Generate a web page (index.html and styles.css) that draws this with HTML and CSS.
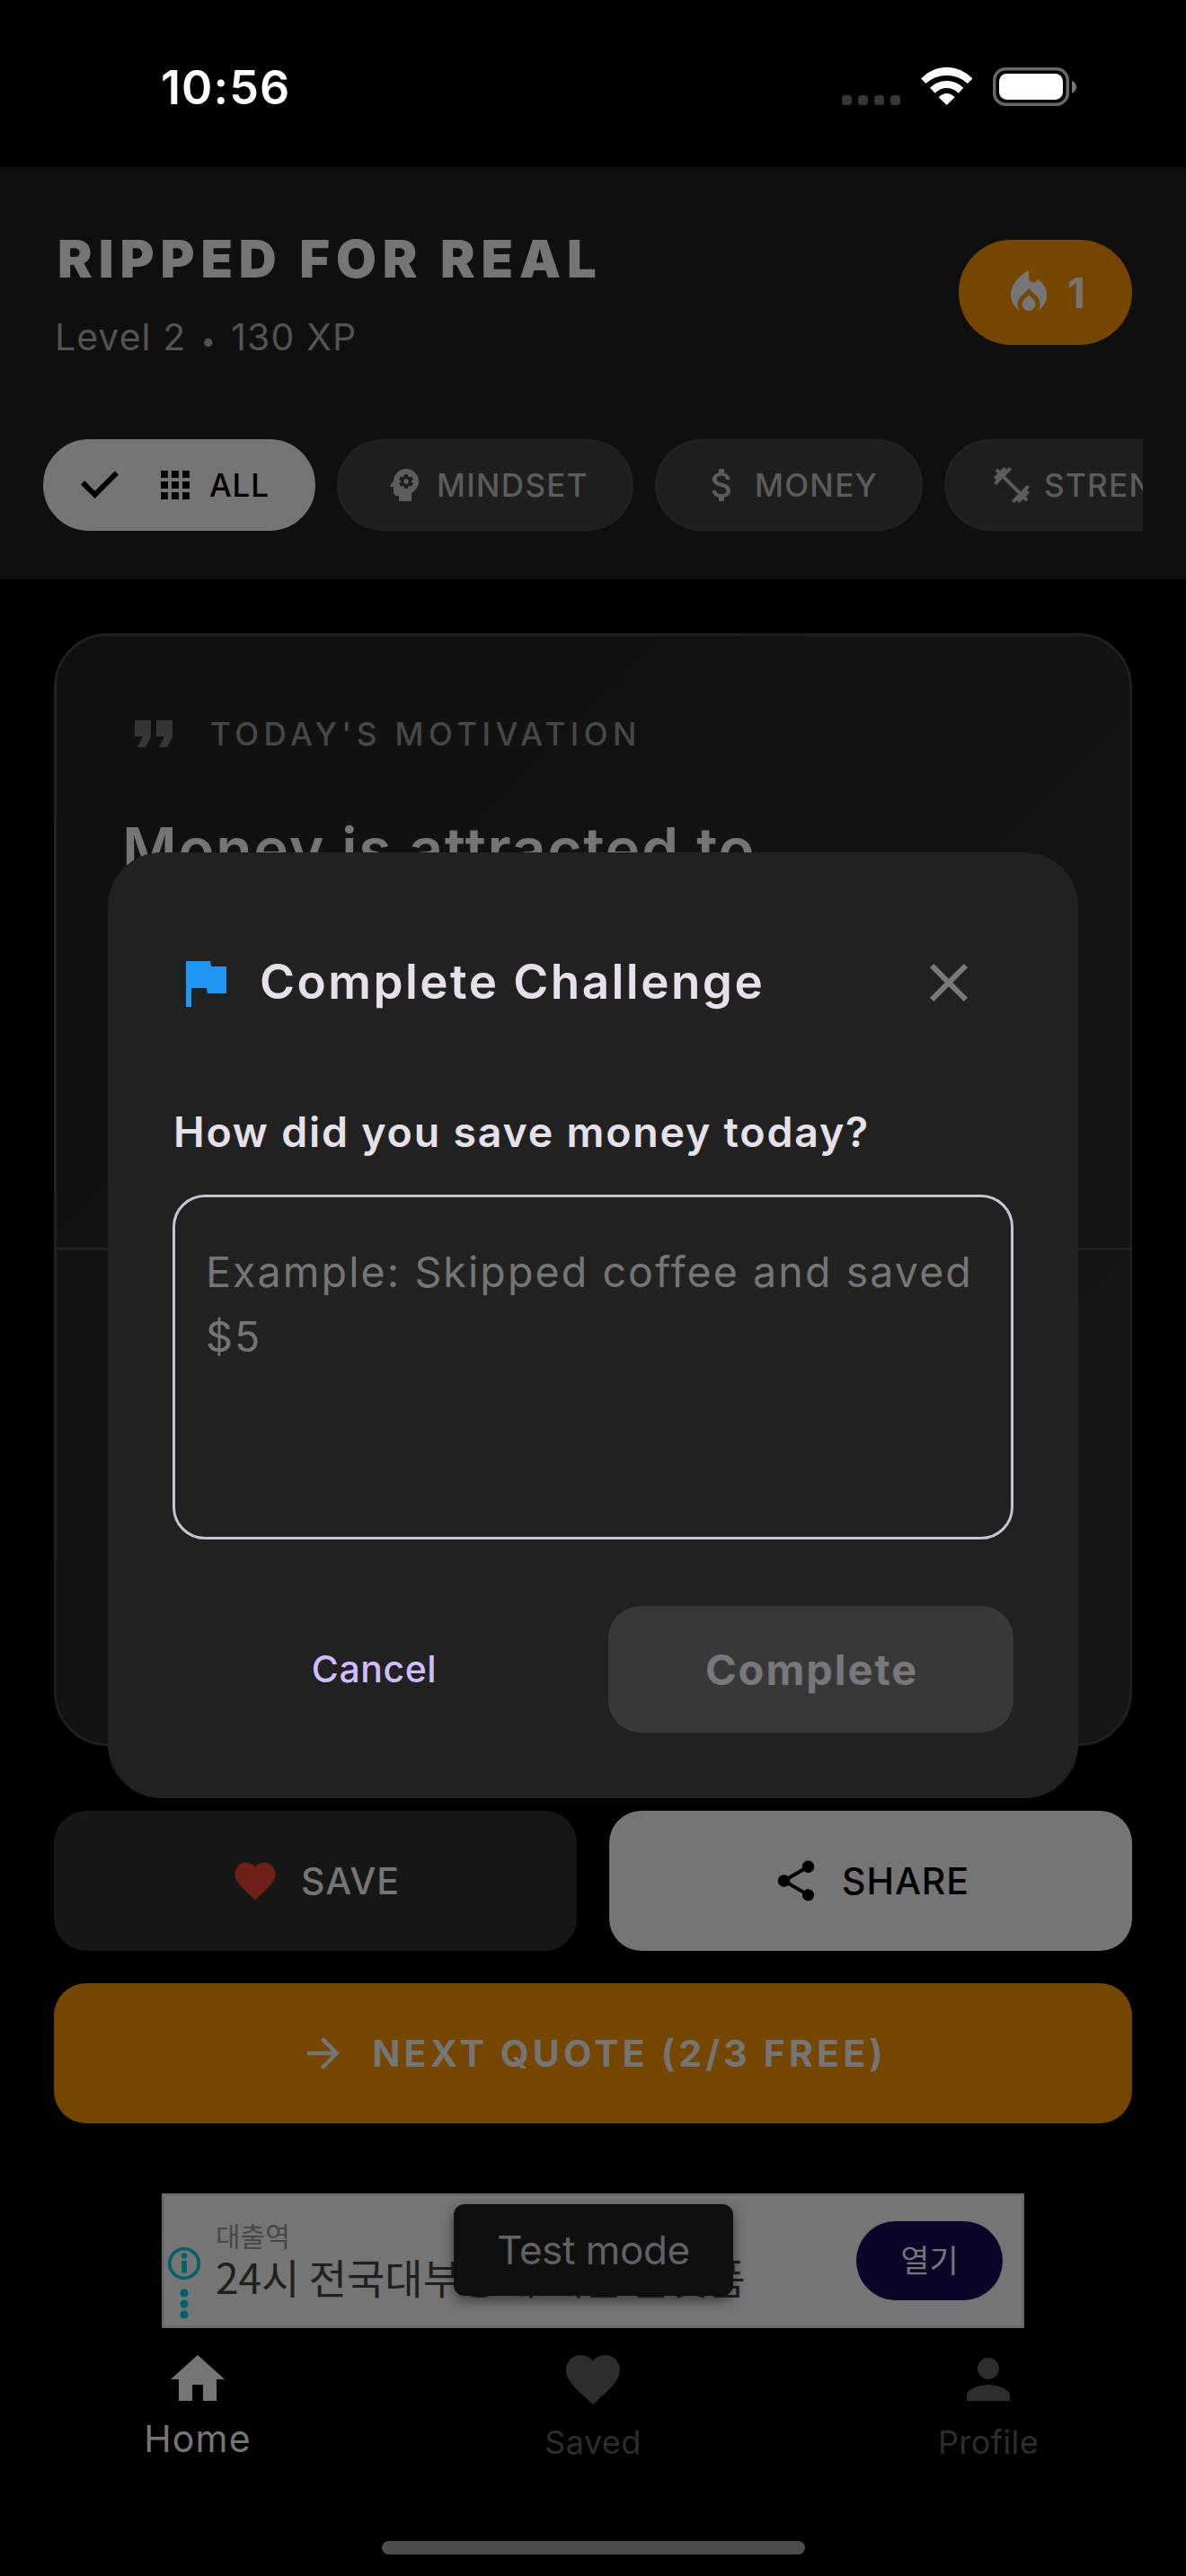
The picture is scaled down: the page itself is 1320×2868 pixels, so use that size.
FILE: index.html
```html
<!DOCTYPE html>
<html lang="en">
<head>
<meta charset="utf-8">
<title>Ripped For Real</title>
<link rel="stylesheet" href="styles.css">
</head>
<body>
<div class="app">
  <div class="status">
    <span class="clock">10:56</span>
    <div class="status-icons">
      <span class="cell"><i></i><i></i><i></i><i></i></span>
      <svg class="wifi" viewBox="0 0 57.4 42"><path d="M0 12.5A39 39 0 0 1 57.4 12.5L51.9 18A34.4 34.4 0 0 0 5.5 18ZM10 22.7A26.6 26.6 0 0 1 47.4 22.7L41.7 28.7A17.7 17.7 0 0 0 15.7 28.7ZM19.7 33.3A11.6 11.6 0 0 1 37.7 33.3L28.7 42Z"/></svg>
      <svg class="battery" viewBox="0 0 94 43"><rect x="1.75" y="1.75" width="81.5" height="39.5" rx="12.5" fill="none" stroke="#686868" stroke-width="3.5"/><rect x="7" y="7" width="71" height="29" rx="8.5"/><path d="M88 15c3 .8 5 3.500 5 6.700s-2 6-5 6.800z" fill="#757575"/></svg>
    </div>
  </div>

  <header class="header">
    <div class="brand-row">
      <div class="brand">
        <h1 class="title">RIPPED FOR REAL</h1>
        <p class="level">Level 2 <span class="dot">•</span> 130 XP</p>
      </div>
      <div class="streak">
        <svg class="i60" viewBox="0 0 24 24"><path d="M16 6l-.44.55C14.38 8.02 12 7.19 12 5.300V2S4 6 4 13c0 2.920 1.560 5.470 3.890 6.860C7.330 19.070 7 18.110 7 17.060c0-1.320.52-2.560 1.470-3.500L12 10.100l3.530 3.470c.95.93 1.470 2.170 1.470 3.500 0 1.020-.31 1.960-.85 2.750 1.890-1.150 3.290-3.060 3.710-5.300.66-3.550-1.070-6.900-3.860-8.520z"/><path d="M12 12.900l-2.130 2.090C9.310 15.550 9 16.280 9 17.060 9 18.680 10.350 20 12 20s3-1.320 3-2.940c0-.78-.31-1.520-.87-2.070L12 12.900z"/></svg>
        <span>1</span>
      </div>
    </div>
    <div class="chips">
      <div class="chip chip-all">
        <svg class="i54" viewBox="0 0 54 54"><path d="M8.100 24.300L21.600 37.800 45.900 13.500" fill="none" stroke="currentColor" stroke-width="6"/></svg>
        <svg class="i48" viewBox="0 0 24 24"><path d="M4 8h4V4H4v4zm6 12h4v-4h-4v4zm-6 0h4v-4H4v4zm0-6h4v-4H4v4zm6 0h4v-4h-4v4zm6-10v4h4V4h-4zm-6 4h4V4h-4v4zm6 6h4v-4h-4v4zm0 6h4v-4h-4v4z"/></svg>
        <span>ALL</span>
      </div>
      <div class="chip chip-mindset">
        <svg class="i48" viewBox="0 0 24 24"><path d="M13 8.570c-.79 0-1.430.64-1.430 1.430s.64 1.430 1.430 1.430 1.430-.64 1.430-1.430-.64-1.430-1.430-1.430z"/><path d="M13 3C9.250 3 6.200 5.940 6.020 9.640L4.100 12.200c-.25.33-.01.8.4.8H6v3c0 1.100.9 2 2 2h1v3h7v-4.680c2.360-1.120 4-3.530 4-6.320 0-3.870-3.130-7-7-7zm3 7c0 .13-.01.26-.02.39l.83.66c.08.06.1.16.05.25l-.8 1.390c-.05.09-.16.12-.24.09l-.99-.4c-.21.16-.43.29-.67.39L14 13.830c-.01.1-.1.17-.2.17h-1.600c-.1 0-.18-.07-.2-.17l-.15-1.060c-.25-.1-.47-.23-.68-.39l-.99.4c-.09.03-.2 0-.25-.09l-.8-1.390c-.05-.08-.03-.19.05-.25l.84-.66c-.01-.13-.02-.26-.02-.39s.02-.27.04-.39l-.85-.66c-.08-.06-.1-.16-.05-.26l.8-1.380c.05-.09.15-.12.24-.09l1 .4c.2-.15.43-.29.67-.39L12 6.170c.02-.1.1-.17.2-.17h1.600c.1 0 .18.07.2.17l.15 1.060c.24.1.46.23.67.39l1-.4c.09-.03.2 0 .24.09l.8 1.380c.05.09.03.2-.05.26l-.85.66c.03.12.04.25.04.39z"/></svg>
        <span>MINDSET</span>
      </div>
      <div class="chip chip-money">
        <svg class="i48" viewBox="0 0 24 24"><path d="M11.800 10.900c-2.270-.59-3-1.200-3-2.150 0-1.090 1.010-1.850 2.700-1.850 1.780 0 2.440.85 2.500 2.100h2.210c-.07-1.720-1.120-3.300-3.210-3.810V3h-3v2.160c-1.940.42-3.500 1.680-3.500 3.610 0 2.310 1.910 3.460 4.700 4.130 2.500.6 3 1.480 3 2.410 0 .69-.49 1.790-2.700 1.790-2.060 0-2.870-.92-2.980-2.100h-2.200c.12 2.190 1.760 3.420 3.680 3.830V21h3v-2.150c1.950-.37 3.500-1.500 3.500-3.550 0-2.840-2.430-3.810-4.700-4.400z"/></svg>
        <span>MONEY</span>
      </div>
      <div class="chip chip-strength">
        <svg class="i48" viewBox="0 0 24 24"><path d="M20.570 14.860L22 13.430 20.570 12 17 15.570 8.430 7 12 3.430 10.570 2 9.140 3.430 7.710 2 5.570 4.140 4.140 2.710 2.710 4.140l1.430 1.430L2 7.710l1.430 1.430L2 10.570 3.430 12 7 8.430 15.570 17 12 20.570 13.430 22l1.430-1.430L16.290 22l2.140-2.140 1.430 1.430 1.430-1.430-1.430-1.430L22 16.290z"/></svg>
        <span>STRENGTH</span>
      </div>
    </div>
  </header>

  <main class="main">
    <section class="card">
      <div class="quote">
        <div class="quote-head">
          <svg class="i72" viewBox="0 0 24 24"><path d="M6 17h3l2-4V7H5v6h3zm8 0h3l2-4V7h-6v6h3z"/></svg>
          <span>TODAY'S MOTIVATION</span>
        </div>
        <p class="quote-text">Money is attracted to</p>
      </div>
    </section>
    <div class="actions">
      <div class="btn btn-save">
        <svg class="i54 red" viewBox="0 0 24 24"><path d="M12 21.350l-1.450-1.320C5.400 15.360 2 12.280 2 8.500 2 5.420 4.420 3 7.500 3c1.740 0 3.410.81 4.500 2.090C13.090 3.810 14.760 3 16.500 3 19.580 3 22 5.420 22 8.500c0 3.780-3.400 6.860-8.550 11.540L12 21.350z"/></svg>
        <span>SAVE</span>
      </div>
      <div class="btn btn-share">
        <svg class="i54" viewBox="0 0 24 24"><path d="M18 16.080c-.76 0-1.440.3-1.960.77L8.910 12.700c.05-.23.09-.46.09-.7s-.04-.47-.09-.7l7.050-4.110c.54.5 1.250.81 2.040.81 1.660 0 3-1.340 3-3s-1.340-3-3-3-3 1.340-3 3c0 .24.04.47.09.7L8.040 9.810C7.500 9.310 6.790 9 6 9c-1.660 0-3 1.340-3 3s1.340 3 3 3c.79 0 1.500-.31 2.040-.81l7.120 4.160c-.05.21-.08.43-.08.65 0 1.610 1.310 2.920 2.920 2.920s2.920-1.310 2.920-2.920-1.310-2.920-2.920-2.920z"/></svg>
        <span>SHARE</span>
      </div>
    </div>
    <div class="btn btn-next">
      <svg class="i54" viewBox="0 0 24 24"><path d="M12 4l-1.410 1.410L16.170 11H4v2h12.170l-5.580 5.590L12 20l8-8z"/></svg>
      <span>NEXT QUOTE (2/3 FREE)</span>
    </div>
  </main>

  <div class="ad">
    <svg class="ad-marks" viewBox="0 0 38 84"><circle cx="19" cy="19" r="16.300" fill="none" stroke="currentColor" stroke-width="3.500"/><circle cx="19" cy="10.500" r="3.200"/><path d="M16.200 16h5.600v13.500h-5.600z"/><circle cx="19" cy="52" r="4.600"/><circle cx="19" cy="64" r="4.600"/><circle cx="19" cy="76" r="4.600"/></svg>
    <div class="ad-copy">
      <p class="ad-brand">대출역</p>
      <p class="ad-title">24시 전국대부중개 대출 플랫폼</p>
    </div>
    <div class="ad-cta">열기</div>
    <div class="toast">Test mode</div>
  </div>

  <nav class="nav">
    <div class="tab tab-on">
      <svg class="i72" viewBox="0 0 24 24"><path d="M10 20v-6h4v6h5v-8h3L12 3 2 12h3v8z"/></svg>
      <span>Home</span>
    </div>
    <div class="tab">
      <svg class="i72" viewBox="0 0 24 24"><path d="M12 21.350l-1.450-1.320C5.400 15.360 2 12.280 2 8.500 2 5.420 4.420 3 7.500 3c1.740 0 3.410.81 4.500 2.090C13.090 3.810 14.760 3 16.500 3 19.580 3 22 5.420 22 8.500c0 3.780-3.400 6.860-8.550 11.540L12 21.350z"/></svg>
      <span>Saved</span>
    </div>
    <div class="tab">
      <svg class="i72" viewBox="0 0 24 24"><path d="M12 12c2.210 0 4-1.790 4-4s-1.790-4-4-4-4 1.790-4 4 1.790 4 4 4zm0 2c-2.670 0-8 1.340-8 4v2h16v-2c0-2.660-5.330-4-8-4z"/></svg>
      <span>Profile</span>
    </div>
  </nav>
  <div class="home-indicator"></div>

  <div class="dialog">
    <div class="dialog-head">
      <svg class="i72 flag" viewBox="0 0 24 24"><path d="M14.400 6L14 4H5v17h2v-7h5.600l.4 2h7V6z"/></svg>
      <h2 class="dialog-title">Complete Challenge</h2>
      <svg class="i72 close" viewBox="0 0 24 24"><path d="M19 6.410L17.590 5 12 10.590 6.410 5 5 6.410 10.590 12 5 17.590 6.410 19 12 13.410 17.590 19 19 17.590 13.410 12z"/></svg>
    </div>
    <p class="dialog-label">How did you save money today?</p>
    <div class="field">Example: Skipped coffee and saved $5</div>
    <div class="dialog-actions">
      <div class="cancel">Cancel</div>
      <div class="complete">Complete</div>
    </div>
  </div>
</div>
</body>
</html>
```
FILE: styles.css
```css
* { box-sizing: border-box; margin: 0; padding: 0; }
body { background: #000; }
svg { display: block; flex: none; fill: currentColor; }

.app {
  position: relative;
  display: flex;
  flex-direction: column;
  width: 1320px;
  height: 2868px;
  overflow: hidden;
  background: #000;
  color: #757575;
  font-family: Inter, "Noto Sans CJK KR", sans-serif;
  white-space: nowrap;
}

.i48 { width: 48px; height: 48px; }
.i54 { width: 54px; height: 54px; }
.i60 { width: 60px; height: 60px; }
.i72 { width: 72px; height: 72px; }

/* Status bar */
.status {
  display: flex;
  justify-content: space-between;
  height: 186px;
  padding: 0 121px 0 179px;
  color: #fff;
}
.clock { margin-top: 68px; font-size: 52px; font-weight: 600; line-height: 60px; letter-spacing: 1.1px; }
.status-icons { display: flex; align-items: flex-start; padding-top: 75px; }
.cell { display: flex; gap: 7px; margin: 31px 23px 0 0; }
.cell i { width: 11px; height: 11px; border-radius: 3.5px; background: #363636; }
.wifi { width: 57.4px; height: 42px; margin-right: 22.600px; }
.battery { width: 94px; height: 43px; }

/* Header */
.header { height: 459px; padding-top: 60px; background: #0f0f0f; }
.brand-row { display: flex; align-items: center; justify-content: space-between; padding: 0 60px; }
.title { padding-left: 4px; font-size: 58px; font-weight: 900; line-height: 84px; letter-spacing: 6.91px; }
.level { margin-top: 15px; padding-left: 1px; color: #535353; font-size: 41px; line-height: 60px; letter-spacing: 1.04px; }
.dot { display: inline-block; width: 25px; font-size: 30px; line-height: 30px; text-align: center; }
.streak {
  display: flex;
  align-items: center;
  gap: 13px;
  width: 193px;
  height: 117px;
  padding-left: 48px;
  border-radius: 60px;
  background: #754600;
  font-size: 46px;
  font-weight: 700;
}
.chips { display: flex; gap: 24px; margin: 84px 48px 0; overflow: hidden; }
.chip {
  display: flex;
  flex: none;
  align-items: center;
  gap: 12px;
  height: 102px;
  padding-left: 48px;
  border: 3px solid #201f24;
  border-radius: 51px;
  background: #1e1e1e;
  color: #5c5c5c;
  font-size: 35px;
  font-weight: 500;
  letter-spacing: 1.3px;
}
.chip-all { width: 303px; padding-left: 33px; border-color: #757575; background: #757575; color: #000; }
.chip-all .i54 { margin-right: 21px; }
.chip-all span { padding-left: 2px; letter-spacing: .8px; }
.chip-mindset { width: 330px; }
.chip-money { width: 298px; }
.chip-strength { width: 366px; }

/* Quote card and actions */
.main { padding: 60px 60px 0; }
.card {
  height: 1239px;
  border: 3px solid #1f1f1f;
  border-radius: 60px;
  background: linear-gradient(135deg, #101010, #161616);
}
.quote { height: 684px; padding: 72px 72px 0; border-bottom: 3px solid #1e1e1e; }
.quote-head { display: flex; align-items: center; gap: 27px; height: 74px; color: #353535; }
.quote-head span { color: #474747; font-size: 35px; font-weight: 500; letter-spacing: 5.44px; }
.quote-text { margin-top: 41px; padding-left: 1px; font-size: 66px; font-weight: 600; line-height: 100px; letter-spacing: 1.6px; }

.actions { display: flex; gap: 36px; margin: 72px 0 36px; }
.btn {
  display: flex;
  flex: 1;
  align-items: center;
  justify-content: center;
  gap: 24px;
  height: 156px;
  border-radius: 36px;
  font-size: 41px;
  font-weight: 500;
  letter-spacing: .9px;
}
.btn-save { background: #161616; }
.btn-share { background: #757575; color: #000; }
.btn-next { gap: 27px; background: #754600; font-weight: 700; letter-spacing: 4.14px; }
.red { color: #701f19; }

/* Ad banner */
.ad {
  position: relative;
  display: flex;
  align-items: center;
  width: 960px;
  height: 150px;
  margin: 78px 0 0 180px;
  padding: 0 21px 0 3px;
  border: 3px solid #696969;
  background: #757575;
}
.ad-marks { width: 38px; height: 84px; margin-top: 52px; color: #00606c; }
.ad-copy { flex: 1; margin: -8px 0 0 16px; font-family: "Noto Sans CJK KR", sans-serif; }
.ad-brand { color: #474747; font-size: 30px; line-height: 42px; }
.ad-title { color: #1f1f1f; font-size: 46px; line-height: 50px; }
.ad-cta {
  width: 163px;
  height: 88px;
  border-radius: 44px;
  background: #0a0529;
  font: 400 35px/84px "Noto Sans CJK KR", sans-serif;
  text-align: center;
}
.toast {
  position: absolute;
  left: 322px;
  top: 9px;
  width: 311px;
  height: 102px;
  border-radius: 12px;
  background: #0f0f10;
  box-shadow: 0 5px 14px rgba(0, 0, 0, .5);
  color: #606163;
  font-size: 44px;
  line-height: 102px;
  letter-spacing: -.43px;
  text-align: center;
}

/* Bottom navigation */
.nav { display: flex; height: 237px; padding-top: 21px; }
.tab { display: flex; flex: 1; flex-direction: column; align-items: center; color: #2d2d2d; font-size: 36px; line-height: 60px; letter-spacing: .4px; }
.tab span { margin-top: 4px; }
.tab-on { color: #757575; font-size: 41px; letter-spacing: 1.2px; }
.tab-on span { margin-top: 0; }
.home-indicator { width: 471px; height: 15px; margin-left: 425px; border-radius: 7.5px; background: #4d4d4d; }

/* Dialog, floating above the page */
.dialog {
  position: absolute;
  left: 120px;
  top: 949px;
  width: 1080px;
  height: 1053px;
  padding: 109px 72px 0;
  border-radius: 60px;
  background: #212121;
  color: #e6e0e9;
}
.dialog-head { display: flex; align-items: center; height: 72px; padding-right: 36px; }
.flag { color: #2196f3; }
.dialog-title { flex: 1; padding: 0 0 2px 25px; font-size: 53px; font-weight: 600; letter-spacing: 2.45px; }
.close { color: #7a7a7a; }
.dialog-label { margin-top: 94px; padding-left: 1px; font-size: 46.5px; font-weight: 600; line-height: 72px; letter-spacing: 1.79px; }
.field {
  height: 384px;
  margin-top: 34px;
  padding: 47px 30px 0 34px;
  border: 3px solid #cac4d0;
  border-radius: 36px;
  color: #757575;
  font-size: 46.5px;
  line-height: 72px;
  letter-spacing: 2.1px;
  white-space: normal;
}
.dialog-actions { display: flex; gap: 36px; margin-top: 74px; }
.cancel, .complete { flex: 1; height: 141px; line-height: 141px; text-align: center; }
.cancel { color: #d0bcff; font-size: 41px; font-weight: 500; letter-spacing: .53px; }
.complete { padding-left: 2px; border-radius: 36px; background: #383838; color: #79777b; font-size: 47px; font-weight: 700; letter-spacing: 1.95px; }
```
